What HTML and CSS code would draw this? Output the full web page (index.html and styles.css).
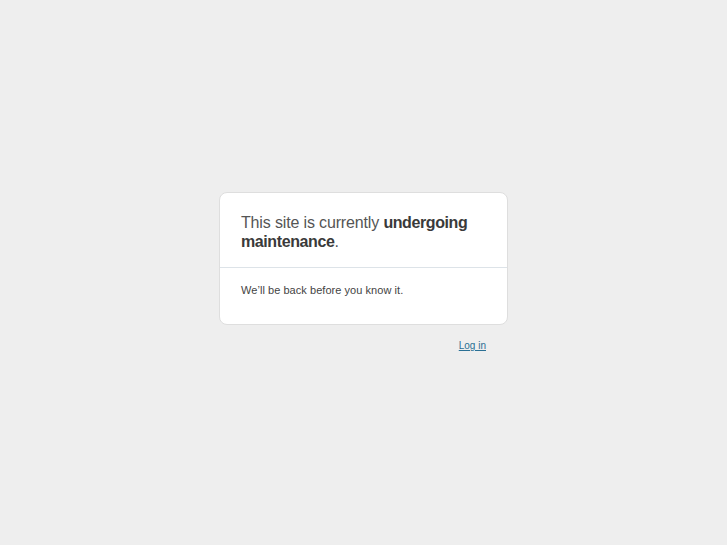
FILE: index.html
```html
<!DOCTYPE html>
<html>
<head>
<meta charset="utf-8">
<link rel="stylesheet" href="styles.css">
</head>
<body>
<div class="wrap">
  <div class="card">
    <div class="head">
      <h1>This site is currently <strong>undergoing maintenance</strong>.</h1>
    </div>
    <div class="body">
      <p>We’ll be back before you know it.</p>
    </div>
  </div>
  <div class="links"><a href="#">Log in</a></div>
</div>
</body>
</html>
```
FILE: styles.css
```css
html, body {
  margin: 0;
  padding: 0;
  background: #eeeeee;
  font-family: "Liberation Sans", Arial, sans-serif;
}
.wrap {
  width: 289px;
  margin: 192px auto 0;
}
.card {
  background: #fff;
  border: 1px solid #dedede;
  border-radius: 8px;
}
.head {
  padding: 20px 21px 16px;
  border-bottom: 1px solid #dde3e8;
}
h1 {
  margin: 0;
  font-size: 16px;
  line-height: 19px;
  font-weight: normal;
  color: #555;
  letter-spacing: -0.15px;
}
h1 strong {
  color: #3a3a3a;
  font-weight: bold;
  letter-spacing: -0.4px;
}
.body {
  padding: 15px 21px 27px;
}
.body p {
  margin: 0;
  font-size: 11px;
  line-height: 14px;
  color: #444;
  letter-spacing: 0.05px;
}
.links {
  display: flex;
  justify-content: flex-end;
  padding: 15px 22px 0;
}
.links a {
  font-size: 10px;
  color: #2a6f94;
  text-decoration: underline;
}
```
